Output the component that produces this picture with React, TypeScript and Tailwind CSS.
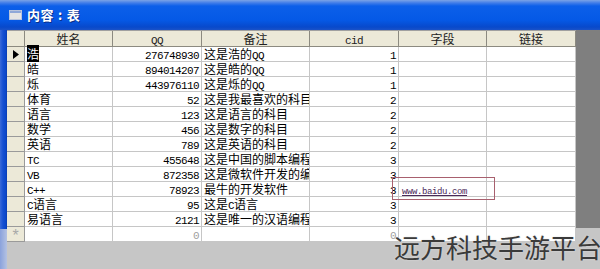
import React from 'react';

type Row = { name: string; qq: string; note: string; cid: string; field?: string };

const rows: Row[] = [
  { name: '浩', qq: '276748930', note: '这是浩的QQ', cid: '1' },
  { name: '皓', qq: '894014207', note: '这是皓的QQ', cid: '1' },
  { name: '烁', qq: '443976110', note: '这是烁的QQ', cid: '1' },
  { name: '体育', qq: '52', note: '这是我最喜欢的科目', cid: '2' },
  { name: '语言', qq: '123', note: '这是语言的科目', cid: '2' },
  { name: '数学', qq: '456', note: '这是数字的科目', cid: '2' },
  { name: '英语', qq: '789', note: '这是英语的科目', cid: '2' },
  { name: 'TC', qq: '455648', note: '这是中国的脚本编程', cid: '3' },
  { name: 'VB', qq: '872358', note: '这是微软件开发的编程', cid: '3' },
  { name: 'C++', qq: '78923', note: '最牛的开发软件', cid: '3', field: 'www.baidu.com' },
  { name: 'C语言', qq: '95', note: '这是C语言', cid: '3' },
  { name: '易语言', qq: '2121', note: '这是唯一的汉语编程', cid: '3' },
];

// ascii runs get the narrow mono face, like the half-width latin of the old grid font
const Mixed: React.FC<{ s: string }> = ({ s }) => (
  <>
    {s.split(/([\x20-\x7e]+)/).map((p, i) =>
      /[\x20-\x7e]/.test(p) ? (
        <span key={i} className="font-['Liberation_Mono'] text-[11px] tracking-[-0.6px]">{p}</span>
      ) : (
        <span key={i}>{p}</span>
      )
    )}
  </>
);

const cols = 'grid grid-cols-[18px_88px_89px_108px_89px_88px_89px]';
const cell = 'h-[15px] border-r border-b border-[#c6c6c6] bg-white overflow-x-clip overflow-y-visible whitespace-nowrap leading-[14px] px-[2px]';
const sel = 'h-[15px] border-r border-b border-[#9a9a9a] bg-[#ece9d8] flex items-center justify-center';
const head = 'h-[16px] border-r border-b border-[#8c8a80] bg-[#ece9d8] text-center leading-[15px] text-[#222]';

export default function App() {
  return (
    <div className="relative w-[600px] h-[269px] overflow-hidden bg-[#c6c6c6] font-['Noto_Sans_CJK_SC',sans-serif] text-[12px] text-black">
      {/* TITLE BAR */}
      <div className="h-[30px] flex items-center pl-[9px] bg-[linear-gradient(to_bottom,#7ba3e6_0px,#3f7ce9_3px,#0c5fe9_6px,#0559e6_20px,#0849cb_27px,#1a52c8_30px)]">
        <div className="w-[13px] h-[10px] bg-[#e4e4e4] border border-[#b8c4dc] flex flex-col">
          <div className="h-[2px] bg-[#8fa8d8]" />
        </div>
        <span className="ml-[5px] text-white font-bold text-[13px] tracking-[0.5px] [text-shadow:1px_1px_0_#0a2f8a]">
          内容<span className="px-[4px]">:</span>表
        </span>
      </div>

      {/* BODY */}
      <div className="flex">
        <div className="w-[7px] flex flex-col h-[239px]">
          <div className="h-[199px] bg-[linear-gradient(to_right,#3a6ad8,#1550d2_3px,#0a46c8_6px,#0a3aa8)]" />
          <div className="flex-1 bg-[linear-gradient(to_right,#8aa2dc,#b4c2e2)]" />
        </div>

        <div className="w-[569px] border-t border-[#a0a0a0]">
          <div className={cols}>
            <div className={head} />
            <div className={head}>姓名</div>
            <div className={head}><Mixed s="QQ" /></div>
            <div className={head}>备注</div>
            <div className={head}><Mixed s="cid" /></div>
            <div className={head}>字段</div>
            <div className={head}>链接</div>

            {rows.map((r, i) => (
              <React.Fragment key={i}>
                <div className={sel}>
                  {i === 0 && (
                    <svg width="6" height="9" viewBox="0 0 6 9"><path d="M0 0 L6 4.5 L0 9 Z" fill="#000" /></svg>
                  )}
                </div>
                <div className={cell}>
                  {i === 0 ? <span className="bg-black text-white">{r.name}</span> : <Mixed s={r.name} />}
                </div>
                <div className={`${cell} text-right`}><Mixed s={r.qq} /></div>
                <div className={cell}><Mixed s={r.note} /></div>
                <div className={`${cell} text-right`}><Mixed s={r.cid} /></div>
                <div className={`${cell} pl-[3px]`}>
                  {r.field && (
                    <span className="font-['Liberation_Mono'] text-[9px] tracking-[-0.4px] underline text-[#4a2a5a]">{r.field}</span>
                  )}
                </div>
                <div className={cell} />
              </React.Fragment>
            ))}

            {/* NEW ROW */}
            <div className={`${sel} text-[#a8a8a8] text-[16px] font-['Liberation_Sans'] leading-none pt-[4px]`}>*</div>
            <div className={cell} />
            <div className={`${cell} text-right text-[#a0a0a0]`}><Mixed s="0" /></div>
            <div className={cell} />
            <div className={`${cell} text-right text-[#a0a0a0]`}><Mixed s="0" /></div>
            <div className={cell} />
            <div className={cell} />
          </div>
        </div>

        <div className="w-[24px] h-[198px] bg-[#7f7f7f]" />
      </div>

      {/* annotation box */}
      <div className="absolute left-[392px] top-[177px] w-[103px] h-[23px] border border-[#a8606e]" />

      {/* watermark */}
      <div className="absolute left-[394px] top-[229px] whitespace-nowrap text-[26px] leading-[36px] text-[#3a3a3a] [text-shadow:0_0_2px_#e0e0e0]">
        远方科技手游平台
      </div>
    </div>
  );
}
